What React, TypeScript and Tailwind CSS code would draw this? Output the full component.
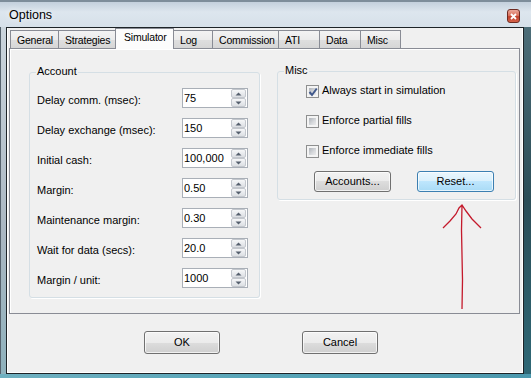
import React from "react";

const tabs = [
  { label: "General", w: "w-[49px]" },
  { label: "Strategies", w: "w-[58px]" },
  { label: "Simulator", w: "w-[59px]", active: true },
  { label: "Log", w: "w-[40px]" },
  { label: "Commission", w: "w-[67px]" },
  { label: "ATI", w: "w-[42px]" },
  { label: "Data", w: "w-[42px]" },
  { label: "Misc", w: "w-[41px]" },
];

const fields = [
  { label: "Delay comm. (msec):", value: "75" },
  { label: "Delay exchange (msec):", value: "150" },
  { label: "Initial cash:", value: "100,000" },
  { label: "Margin:", value: "0.50" },
  { label: "Maintenance margin:", value: "0.30" },
  { label: "Wait for data (secs):", value: "20.0" },
  { label: "Margin / unit:", value: "1000" },
];

const checks = [
  { label: "Always start in simulation", checked: true },
  { label: "Enforce partial fills", checked: false },
  { label: "Enforce immediate fills", checked: false },
];

function SpinHalf({ up }: { up?: boolean }) {
  return (
    <div className="flex h-[9px] items-center justify-center rounded-[2px] border border-[#c3c7cd] bg-[linear-gradient(180deg,#f6f7f8_0%,#e9ebee_50%,#dcdfe3_100%)]">
      <svg width="7" height="4" viewBox="0 0 7 4">
        {up ? (
          <path d="M0.5 3.5 L3.5 0.5 L6.5 3.5 Z" fill="#56606e" />
        ) : (
          <path d="M0.5 0.5 L3.5 3.5 L6.5 0.5 Z" fill="#56606e" />
        )}
      </svg>
    </div>
  );
}

function Spin({ value }: { value: string }) {
  return (
    <div className="flex h-[20px] w-[66px] border border-[#a9afb7] bg-white">
      <span className="flex flex-1 items-center pl-[1px] leading-[13px]">{value}</span>
      <div className="mr-[1px] flex w-[15px] flex-col">
        <SpinHalf up />
        <SpinHalf />
      </div>
    </div>
  );
}

function Check({ checked }: { checked: boolean }) {
  return (
    <span className="relative flex h-[13px] w-[13px] shrink-0 border border-[#8e8f8f] bg-[#f4f4f4] p-[2px]">
      <span className="flex-1 bg-[linear-gradient(135deg,#aeb3b9_0%,#d8dadd_60%,#ebebeb_100%)]" />
      {checked && (
        <svg className="absolute left-[1px] top-[1px]" width="10" height="10" viewBox="0 0 10 10">
          <path d="M1.5 5 L4 8 L8.8 1.5" fill="none" stroke="#41598c" strokeWidth="2" />
        </svg>
      )}
    </span>
  );
}

function WinButton({ label, focused, size }: { label: string; focused?: boolean; size: string }) {
  return (
    <div
      className={`flex items-center justify-center rounded-[3px] border ${size} ${
        focused
          ? "border-[#3c7fb1] bg-[linear-gradient(180deg,#eaf6fd_0%,#d9f0fc_50%,#bee6fd_50%,#a9dbf6_100%)]"
          : "border-[#707070] bg-[linear-gradient(180deg,#f2f2f2_0%,#ebebeb_50%,#dddddd_50%,#cfcfcf_100%)]"
      } shadow-[inset_0_0_0_1px_rgba(255,255,255,0.7)]`}
    >
      {label}
    </div>
  );
}

function Group({ title, className, children }: { title: string; className: string; children: React.ReactNode }) {
  return (
    <div className={`relative rounded-[3px] border border-[#d5dfe5] shadow-[1px_1px_0_#fff] ${className}`}>
      <span className="absolute -top-[8px] left-[6px] bg-[#f0f0f0] px-[1px] leading-[13px]">{title}</span>
      {children}
    </div>
  );
}

export default function App() {
  return (
    <div className="relative flex h-[378px] w-[531px] flex-col overflow-hidden bg-[#5aa5b6] font-['Liberation_Sans',Arial,sans-serif] text-[11px] text-black">
      {/* title bar */}
      <div className="flex h-[27px] shrink-0 items-start justify-between border-t-2 border-[#7d8d9a] bg-[linear-gradient(180deg,#c3d0dc_0%,#dde6ee_40%,#d6e0e9_100%)] pl-[9px] pr-[11px]">
        <span className="mt-[6px] text-[12.5px] leading-[15px] [text-shadow:0_0_6px_#fff]">Options</span>
        <div className="mt-[7px] flex h-[14px] w-[13px] items-center justify-center rounded-[3px] border border-[#6e2b22] bg-[linear-gradient(180deg,#eaa89a_0%,#d86b55_50%,#c0402a_55%,#d4624a_100%)]">
          <svg width="7" height="7" viewBox="0 0 7 7">
            <path d="M1 1 L6 6 M6 1 L1 6" stroke="#fff" strokeWidth="1.8" />
          </svg>
        </div>
      </div>

      <div className="flex flex-1">
        <div className="w-[6px] border-l border-[#56636e] bg-[linear-gradient(180deg,#cbd5dd_0%,#aab7c2_60%,#8fb2bd_100%)]" />

        {/* client area */}
        <div className="flex flex-1 flex-col border border-[#1d2327] bg-[#f0f0f0]">
          <div className="flex flex-1 flex-col border-x border-b border-white border-t-0">
            {/* tabs */}
            <div className="ml-[2px] flex h-[20px] items-end text-[10.5px] tracking-[-0.2px]">
              {tabs.map((t, i) =>
                t.active ? (
                  <div
                    key={t.label}
                    className={`relative z-10 -mb-px h-[21px] ${t.w} ${i ? "-ml-px" : ""} border-x border-t border-[#898c95] bg-[#fcfcfc] pl-[8px] pt-[2px] leading-[13px]`}
                  >
                    {t.label}
                  </div>
                ) : (
                  <div
                    key={t.label}
                    className={`h-[18px] ${t.w} ${i ? "-ml-px" : ""} border-x border-t border-[#898c95] bg-[linear-gradient(180deg,#f3f3f3_0%,#ebebeb_50%,#dedede_55%,#d6d6d6_100%)] pl-[6px] pt-[3px] leading-[13px]`}
                  >
                    {t.label}
                  </div>
                )
              )}
            </div>

            {/* tab page */}
            <div className="relative ml-[1px] mr-[2px] flex h-[266px] items-start border border-[#898c95] bg-[#f0f0f0] pl-[19px] pt-[23px] shadow-[inset_1px_1px_0_#fff]">
              <Group title="Account" className="h-[226px] w-[231px] pl-[7px] pr-[11px] pt-[15px]">
                <div className="flex flex-col gap-[10px]">
                  {fields.map((f) => (
                    <div key={f.label} className="flex items-start justify-between">
                      <span className="pt-[6px] leading-[13px]">{f.label}</span>
                      <Spin value={f.value} />
                    </div>
                  ))}
                </div>
              </Group>

              <Group title="Misc" className="-mt-px ml-[17px] h-[129px] w-[239px] pl-[28px] pt-[13px]">
                <div className="flex flex-col gap-[17px]">
                  {checks.map((c) => (
                    <div key={c.label} className="flex h-[13px] items-center gap-[3px]">
                      <Check checked={c.checked} />
                      <span className="-mt-[2px] leading-[13px]">{c.label}</span>
                    </div>
                  ))}
                </div>
                <div className="ml-[8px] mt-[13px] flex gap-[26px]">
                  <WinButton label="Accounts..." size="h-[21px] w-[77px]" />
                  <WinButton label="Reset..." focused size="h-[21px] w-[77px]" />
                </div>
              </Group>
            </div>

            {/* dialog buttons */}
            <div className="mt-[17px] flex gap-[82px] pl-[136px]">
              <WinButton label="OK" size="h-[23px] w-[76px]" />
              <WinButton label="Cancel" size="h-[23px] w-[76px]" />
            </div>
          </div>
        </div>

        <div className="w-[7px] bg-[linear-gradient(180deg,#4d6d78_0%,#2b4d57_50%,#2f6876_100%)]" />
      </div>

      <div className="h-[4px] shrink-0 bg-[linear-gradient(90deg,#6fb0c0_0%,#58a5b8_50%,#4b98ad_100%)]" />

      {/* hand-drawn annotation arrow */}
      <svg className="pointer-events-none absolute left-0 top-0" width="531" height="378" viewBox="0 0 531 378">
        <path
          d="M462 309 L462.5 280 L462 255 L461.5 230 L462 205 M443 228 L450 221 L456 214 L459 208 L462 205 L466 211 L472 219 L481 228"
          fill="none"
          stroke="#c41a2c"
          strokeWidth="1.3"
        />
      </svg>
    </div>
  );
}
